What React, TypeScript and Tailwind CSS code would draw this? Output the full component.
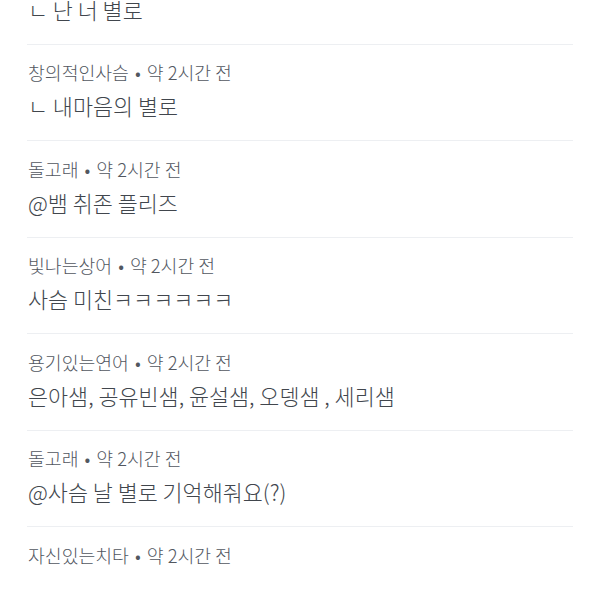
import React from "react";

type Item = { name?: string; body?: string };

const items: Item[] = [
  { name: "창의적인사슴", body: "ㄴ 난 너 별로" },
  { name: "창의적인사슴", body: "ㄴ 내마음의 별로" },
  { name: "돌고래", body: "@뱀 취존 플리즈" },
  { name: "빛나는상어", body: "사슴 미친ㅋㅋㅋㅋㅋㅋ" },
  { name: "용기있는연어", body: "은아샘, 공유빈샘, 윤설샘, 오뎅샘 , 세리샘" },
  { name: "돌고래", body: "@사슴 날 별로 기억해줘요(?)" },
  { name: "자신있는치타" },
];

export default function App() {
  return (
    <div
      className="w-[600px] h-[600px] overflow-hidden bg-white"
      style={{ fontFamily: '"Noto Sans CJK KR", Roboto, "Noto Sans", sans-serif' }}
    >
      <div className="-mt-[52px] px-[27px]">
        {items.map((it, i) => (
          <div
            key={i}
            className={
              "pt-[15.5px] pb-[20px] flex flex-col gap-[8px] " +
              (i < items.length - 1 ? "border-b border-[#edeff2]" : "")
            }
          >
            <div className="text-[18.3px] leading-[24px] font-light text-[#52575f] pl-px">
              {it.name} <span className="mx-[2px]">•</span> 약 2시간 전
            </div>
            {it.body ? (
              <div className="text-[21.8px] leading-[28px] font-light text-[#41464d] pl-px">{it.body}</div>
            ) : null}
          </div>
        ))}
      </div>
    </div>
  );
}
